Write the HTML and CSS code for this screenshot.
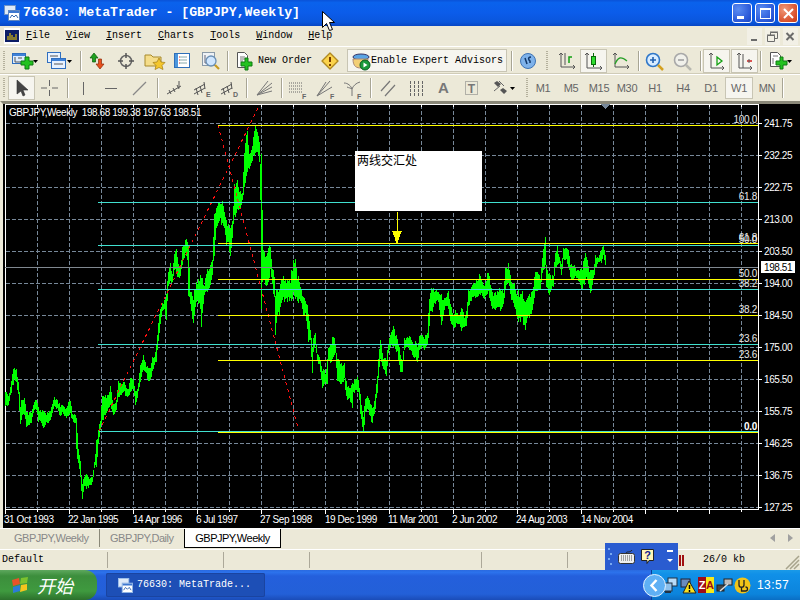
FILE: index.html
```html
<!DOCTYPE html>
<html lang="en">
<head>
<meta charset="utf-8">
<title>76630: MetaTrader - [GBPJPY,Weekly]</title>
<link rel="stylesheet" href="styles.css">
</head>
<body>
<div class="screen">
  <header class="titlebar">
    <svg class="appicon" width="16" height="16" viewBox="0 0 16 16"><rect x="0.5" y="0.5" width="11" height="9" fill="#dfeaf8" stroke="#6f93c8"/><rect x="4.5" y="5.5" width="11" height="10" fill="#fff" stroke="#5f86c0"/><rect x="5" y="6" width="10" height="2" fill="#3f78d0"/><path d="M6 13l2-3 2 2 2-2 2 3" fill="none" stroke="#3a6ab0"/></svg>
    <span class="apptitle">76630: MetaTrader - [GBPJPY,Weekly]</span>
    <div class="capbtns">
      <span class="capbtn"><svg width="19" height="19" viewBox="0 0 19 19"><rect x="4" y="12" width="7" height="3" fill="#fff"/></svg></span>
      <span class="capbtn"><svg width="19" height="19" viewBox="0 0 19 19"><rect x="4.5" y="4.5" width="10" height="10" fill="none" stroke="#fff"/><rect x="4" y="4" width="11" height="2" fill="#fff"/></svg></span>
      <span class="capbtn capclose"><svg width="19" height="19" viewBox="0 0 19 19"><path d="M5 5l9 9M14 5l-9 9" stroke="#fff" stroke-width="2"/></svg></span>
    </div>
  </header>

  <nav class="menubar">
    <svg class="docicon" width="16" height="16" viewBox="0 0 16 16"><rect width="16" height="16" fill="#fff"/><rect x="1" y="2" width="14" height="12" fill="#0c1d66"/><path d="M4 12V8M6 12V5M8 12V7M10 12V9M12 12V6" stroke="#ffd800"/></svg>
    <span class="menu m1"><u>F</u>ile</span>
    <span class="menu m2"><u>V</u>iew</span>
    <span class="menu m3"><u>I</u>nsert</span>
    <span class="menu m4"><u>C</u>harts</span>
    <span class="menu m5"><u>T</u>ools</span>
    <span class="menu m6"><u>W</u>indow</span>
    <span class="menu m7"><u>H</u>elp</span>
    <div class="docbtns">
      <span class="docbtn"><svg width="15" height="17" viewBox="0 0 15 17"><rect x="4" y="11" width="6" height="2" fill="#6b6b6b"/></svg></span>
      <span class="docbtn"><svg width="15" height="17" viewBox="0 0 15 17"><path d="M2.5 7.5h7v6h-7zM5.5 7V4.500h7v6H10" fill="none" stroke="#6b6b6b"/><path d="M2 7h8M5 4h8" stroke="#6b6b6b"/></svg></span>
      <span class="docbtn"><svg width="15" height="17" viewBox="0 0 15 17"><path d="M3.500 5l7 7M10.500 5l-7 7" stroke="#6b6b6b" stroke-width="2"/></svg></span>
    </div>
  </nav>

  <div class="toolbar tb1">
    <span class="grip"></span>
    <svg class="btn" width="36" height="24" viewBox="0 0 36 24"><rect x="4.500" y="4.500" width="13" height="10" fill="#dcecff" stroke="#2f6fc0"/><rect x="5" y="5" width="12" height="2" fill="#3f82d8"/><path d="M7 8v5h8M10 9h4" stroke="#555" fill="none"/><path d="M14 10h4V6h4v4h4v4h-4v4h-4v-4h-4z" transform="translate(-1 2)" fill="#23c21f" stroke="#0f7a12"/><path d="M25 11h5l-2.500 3z" fill="#000"/></svg>
    <svg class="btn" width="32" height="24" viewBox="0 0 32 24"><rect x="3.500" y="3.500" width="13" height="10" fill="#e8f2ff" stroke="#2f6fc0"/><rect x="7.500" y="9.500" width="14" height="10" fill="#e8f2ff" stroke="#2f6fc0"/><rect x="8" y="10" width="13" height="2" fill="#3f82d8"/><path d="M10 15h9M6 7h8" stroke="#555"/><path d="M23 11h5l-2.500 3z" fill="#000"/></svg>
    <span class="sep"></span>
    <svg class="btn" width="28" height="24" viewBox="0 0 28 24"><path d="M10 4l-4 5h2.500v4h3V9H14z" fill="#20a020" stroke="#0a5a0a" stroke-width=".7"/><path d="M16 20l4-5h-2.500v-5h-3v5H12z" fill="#e8501c" stroke="#8a2a0a" stroke-width=".7"/></svg>
    <svg class="btn" width="28" height="24" viewBox="0 0 28 24"><circle cx="14" cy="12" r="5.500" fill="none" stroke="#666" stroke-width="1.500"/><path d="M14 4v5M14 15v5M6 12h5M17 12h5" stroke="#555" stroke-width="1.500"/></svg>
    <svg class="btn" width="28" height="24" viewBox="0 0 28 24"><path d="M5 6h6l2 2h8v9H5z" fill="#f5dd8a" stroke="#a88a2c"/><path d="M19 9l2 4 4 .5-3 3 1 4-4-2-4 2 1-4-3-3 4-.5z" fill="#f4c62c" stroke="#a07a10" stroke-width=".7"/></svg>
    <svg class="btn" width="28" height="24" viewBox="0 0 28 24"><rect x="6.500" y="4.500" width="15" height="14" fill="#fff" stroke="#2e6fb8"/><rect x="7" y="5" width="3" height="13" fill="#4c96dd"/><path d="M12 8h7M12 11h7M12 14h7" stroke="#8aa" /><path d="M11 8h1M11 11h1M11 14h1" stroke="#d03030"/></svg>
    <svg class="btn" width="28" height="24" viewBox="0 0 28 24"><rect x="6.500" y="3.500" width="12" height="13" fill="#eef2f6" stroke="#8a9aa8"/><path d="M9 6v8h7" stroke="#667" fill="none"/><circle cx="15" cy="12" r="5" fill="#cfe6ff" stroke="#6a8fb4" stroke-width="1.300"/><path d="M19 16l4 4" stroke="#c89a20" stroke-width="2.200"/></svg>
    <span class="sep sep6"></span>
    <div class="orderbtn">
      <svg width="24" height="24" viewBox="0 0 24 24"><path d="M7.500 3.500h7l3 3v12h-10z" fill="#fff" stroke="#555"/><path d="M10 8h5M10 10h5M10 12h3" stroke="#777"/><path d="M13 12h4V8h3v4h4v4h-4v4h-3v-4h-4z" transform="translate(-2 1)" fill="#23c21f" stroke="#0f7a12"/></svg>
      <span class="monotxt">New Order</span>
    </div>
    <svg class="btn" width="28" height="24" viewBox="0 0 28 24"><path d="M14 4l8 8-8 8-8-8z" fill="#fbd34c" stroke="#b08a20" stroke-linejoin="round" stroke-width="1.400"/><path d="M14 8v5M14 15v2" stroke="#7a3c00" stroke-width="2"/></svg>
    <div class="eabtn">
      <svg width="20" height="20" viewBox="0 0 20 20"><ellipse cx="10" cy="6" rx="8" ry="3" fill="#5aa4e4" stroke="#336"/><path d="M2 8c0 8 4 9 8 9 3 0 6-2 7-9z" fill="#f3cf76" stroke="#a87"/><circle cx="14" cy="14" r="5" fill="#1a9a3a" stroke="#0a5a20"/><path d="M12.500 11.500l4 2.500-4 2.500z" fill="#fff"/></svg>
      <span class="monotxt">Enable Expert Advisors</span>
    </div>
    <span class="sep"></span>
    <svg class="btn" width="26" height="24" viewBox="0 0 26 24"><circle cx="13" cy="12" r="7.500" fill="#7eb2ea" stroke="#3e73b4"/><path d="M10 9l2 6M16 8c-2 0-3 1-2 3l1 1v2" fill="none" stroke="#12386a" stroke-width="1.500"/></svg>
    <span class="grip grip12"></span>
    <svg class="btn" width="27" height="24" viewBox="0 0 27 24"><path d="M8 4v14h14M6 6l2-2 2 2M20 16l2 2-2 2M12 16V4" fill="none" stroke="#555"/><path d="M16 14v-6h3" fill="none" stroke="#12a012" stroke-width="1.500"/></svg>
    <svg class="btn on" width="27" height="24" viewBox="0 0 27 24"><path d="M7 4v15h15M5 6l2-2 2 2M20 17l2 2-2 2" fill="none" stroke="#555"/><rect x="11.500" y="7.500" width="4" height="8" fill="#2fdc2f" stroke="#0a6a0a"/><path d="M13.500 4v3M13.500 15v3" stroke="#0a6a0a"/></svg>
    <svg class="btn" width="28" height="24" viewBox="0 0 28 24"><path d="M8 4v14h14M6 6l2-2 2 2M20 16l2 2-2 2" fill="none" stroke="#555"/><path d="M8 15c3-7 6-8 12-3" fill="none" stroke="#2aa02a" stroke-width="1.300"/></svg>
    <span class="sep sep6"></span>
    <svg class="btn" width="28" height="24" viewBox="0 0 28 24"><circle cx="12" cy="11" r="6.500" fill="#d8ecff" stroke="#2f77c8" stroke-width="1.600"/><path d="M9 11h6M12 8v6" stroke="#2060b0" stroke-width="1.600"/><path d="M17 16l5 5" stroke="#d4a020" stroke-width="2.500"/></svg>
    <svg class="btn" width="28" height="24" viewBox="0 0 28 24"><circle cx="12" cy="11" r="6.500" fill="#f0f0ea" stroke="#a8a8a8" stroke-width="1.600"/><path d="M9 11h6" stroke="#a0a0a0" stroke-width="1.600"/><path d="M17 16l5 5" stroke="#b8b8b0" stroke-width="2.500"/></svg>
    <span class="sep sep6"></span>
    <svg class="btn on" width="27" height="24" viewBox="0 0 27 24"><path d="M8 4v15h13M6 6l2-2 2 2M19 17l2 2-2 2" fill="none" stroke="#555"/><path d="M14 8l5 4-5 4z" fill="none" stroke="#12a012" stroke-width="1.300"/></svg>
    <svg class="btn on gapl" width="27" height="24" viewBox="0 0 27 24"><path d="M8 4v15h13M6 6l2-2 2 2M19 17l2 2-2 2M12 5v14" fill="none" stroke="#555"/><path d="M16 12h5" stroke="#d02020" stroke-width="1.500"/><path d="M18 10v4" stroke="#555"/></svg>
    <span class="sep sep6"></span>
    <svg class="btn" width="36" height="24" viewBox="0 0 36 24"><path d="M7.500 3.500h7l3 3v11h-10z" fill="#fff" stroke="#555"/><path d="M10 7h5M10 9v6" stroke="#777"/><path d="M13 12h4V8h3v4h4v4h-4v4h-3v-4h-4z" fill="#23c21f" stroke="#0f7a12"/><path d="M24 11h5l-2.500 3z" fill="#000"/></svg>
  </div>

  <div class="toolbar tb2">
    <span class="grip"></span>
    <svg class="btn on" width="27" height="24" viewBox="0 0 27 24"><path d="M9 4v14l4-3 2 5 2-1-2-5h5z" fill="#444" stroke="#333" stroke-width=".6"/></svg>
    <svg class="btn" width="29" height="24" viewBox="0 0 29 24"><path d="M14.500 4v6M14.500 14v6M6 12h6M17 12h6" stroke="#666"/></svg>
    <span class="sep sep6"></span>
    <svg class="btn" width="26" height="24" viewBox="0 0 26 24"><path d="M13.500 6v13" stroke="#666"/></svg>
    <svg class="btn" width="30" height="24" viewBox="0 0 30 24"><path d="M9 12.500h12" stroke="#666"/></svg>
    <svg class="btn" width="28" height="24" viewBox="0 0 28 24"><path d="M7 19L20 6" stroke="#888" stroke-width="1.200"/></svg>
    <span class="sep sep6"></span>
    <svg class="btn" width="28" height="24" viewBox="0 0 28 24"><path d="M7 18l14-8M9 14l2 4M13 12l2 4M17 9l2 4M19 5v7" stroke="#555" fill="none"/></svg>
    <svg class="btn" width="27" height="24" viewBox="0 0 27 24"><path d="M6 18l11-6M6 14l11-6M8 12l2 7M12 10l2 7M16 6l1 7" stroke="#555" fill="none"/><text class="tinyletter" x="18" y="21">E</text></svg>
    <svg class="btn" width="28" height="24" viewBox="0 0 28 24"><path d="M6 18l11-6M6 14l11-6M8 12l2 7M12 10l2 7M16 6l1 7" stroke="#555" fill="none"/><text class="tinyletter" x="18" y="21">D</text></svg>
    <span class="sep sep6"></span>
    <svg class="btn" width="30" height="24" viewBox="0 0 30 24"><path d="M8 19L23 7M8 19L23 11M8 19L23 15M8 19L19 5" stroke="#777" fill="none"/></svg>
    <span class="sep sep4"></span>
    <svg class="btn" width="29" height="24" viewBox="0 0 29 24"><path d="M6 7h14M6 10h14M6 13h14M6 16h14" stroke="#666" stroke-dasharray="1 1" fill="none"/><text class="tinyletter" x="19" y="23">F</text></svg>
    <svg class="btn" width="27" height="24" viewBox="0 0 27 24"><path d="M5 20L18 5M5 20L20 11M5 20L14 6" stroke="#777" fill="none"/><text class="tinyletter" x="18" y="23">F</text></svg>
    <svg class="btn" width="28" height="24" viewBox="0 0 28 24"><path d="M5 7c4 0 7 3 8 6 1-3 4-6 8-7M13 13v7M8 11c2 1 4 1 5 2" stroke="#777" fill="none"/><text class="tinyletter" x="18" y="23">F</text></svg>
    <span class="sep sep6"></span>
    <svg class="btn" width="29" height="24" viewBox="0 0 29 24"><path d="M8 15L17 5M12 20L22 9" stroke="#777" stroke-width="1.200"/></svg>
    <svg class="btn" width="28" height="24" viewBox="0 0 28 24"><path d="M8.500 5v15M12.500 5v15M16.500 5v15M20.500 5v15" stroke="#666" stroke-dasharray="3 1"/></svg>
    <span class="btn letter">A</span>
    <svg class="btn" width="29" height="24" viewBox="0 0 29 24"><rect x="8.500" y="5.500" width="12" height="13" fill="none" stroke="#777" stroke-dasharray="1 1"/><text class="boxletter" x="14.500" y="17">T</text></svg>
    <svg class="btn" width="36" height="24" viewBox="0 0 36 24"><path d="M8 7l4 4 3-3-4-3zM14 14l4 4 3-3-4-3z" fill="#555"/><path d="M13 5l5 5M8 15l6-5" stroke="#666"/><path d="M24 11h5l-2.500 3z" fill="#000"/></svg>
    <span class="grip grip7"></span>
    <span class="tf">M1</span>
    <span class="tf">M5</span>
    <span class="tf">M15</span>
    <span class="tf">M30</span>
    <span class="tf">H1</span>
    <span class="tf">H4</span>
    <span class="tf">D1</span>
    <span class="tf tfon">W1</span>
    <span class="tf">MN</span>
    <span class="sep sep2"></span>
  </div>

  <main class="chart">
    <svg id="plot" width="797" height="424" viewBox="3 104 797 424">
      <g id="grid" class="grid"></g>
      <rect class="frame" x="5.500" y="104.500" width="752.500" height="404.500"/>
      <g id="axisticks" class="ticks"></g>
      <path class="marker" d="M601 104h9l-4.500 5z"/>
      <path id="series" class="series"/>
      <g class="dots">
        <path d="M218 125L298 428"/>
        <path d="M99 431L260 104"/>
      </g>
      <g class="cyan">
        <path d="M98 202.500H758M98 245.500H758M98 289.500H758M98 344.500H758M99 431.500H758"/>
      </g>
      <path class="grayline" d="M5 267.500H758"/>
      <g class="yellow">
        <path d="M218 125.500H758M218 243.500H758M218 279.500H758M218 315.500H758M218 360.500H758M218 432.500H758"/>
      </g>
      <text class="lbl" x="9" y="116" xml:space="preserve">GBPJPY,Weekly  198.68 199.38 197.63 198.51</text>
      <g class="fibo">
        <text x="757" y="123">100.0</text>
        <text x="757" y="200">61.8</text>
        <text x="757" y="241">61.8</text>
        <text x="757" y="243">50.0</text>
        <text x="757" y="277">50.0</text>
        <text x="757" y="287">38.2</text>
        <text x="757" y="313">38.2</text>
        <text x="757" y="342">23.6</text>
        <text x="757" y="358">23.6</text>
        <text class="bold" x="757" y="430">0.0</text>
      </g>
      <g class="prices">
        <text x="764" y="127">241.75</text>
        <text x="764" y="159">232.25</text>
        <text x="764" y="191">222.75</text>
        <text x="764" y="223">213.00</text>
        <text x="764" y="255">203.50</text>
        <text x="764" y="287">194.00</text>
        <text x="764" y="319">184.50</text>
        <text x="764" y="351">175.00</text>
        <text x="764" y="383">165.50</text>
        <text x="764" y="415">155.75</text>
        <text x="764" y="447">146.25</text>
        <text x="764" y="479">136.75</text>
        <text x="764" y="511">127.25</text>
      </g>
      <rect class="pricebox" x="761" y="261" width="34" height="12"/>
      <text class="pricecur" x="764" y="271">198.51</text>
      <g class="times">
        <text x="4" y="523">31 Oct 1993</text>
        <text x="68" y="523">22 Jan 1995</text>
        <text x="133" y="523">14 Apr 1996</text>
        <text x="196" y="523">6 Jul 1997</text>
        <text x="260" y="523">27 Sep 1998</text>
        <text x="325" y="523">19 Dec 1999</text>
        <text x="388" y="523">11 Mar 2001</text>
        <text x="452" y="523">2 Jun 2002</text>
        <text x="516" y="523">24 Aug 2003</text>
        <text x="581" y="523">14 Nov 2004</text>
      </g>
      <rect class="notebox" x="355" y="151" width="127" height="60"/>
      <text class="notetext" x="357" y="165">两线交汇处</text>
      <path class="arrowline" d="M397.500 212V232"/>
      <path class="arrowhead" d="M392 231h10l-3 7-1 5h-2l-1-5z"/>
    </svg>
  </main>

  <div class="tabs">
    <span class="tab t1">GBPJPY,Weekly</span>
    <span class="tab t2">GBPJPY,Daily</span>
    <span class="tab active">GBPJPY,Weekly</span>
    <div class="tabarrows">
      <svg width="6" height="8" viewBox="0 0 6 8"><path d="M5 0v8L0 4z" fill="#a0a0a0"/></svg>
      <svg width="6" height="8" viewBox="0 0 6 8"><path d="M1 0v8l5-4z" fill="#a0a0a0"/></svg>
    </div>
  </div>

  <footer class="status">
    <span class="cell c1">Default</span>
    <span class="cell c2"></span>
    <span class="cell c3"></span>
    <span class="cell c4"></span>
    <span class="cell c5"></span>
    <span class="cell c6"><svg class="netbars" width="6" height="11" viewBox="0 0 6 11"><path d="M1 0v11M4 0v11" stroke="#a01010" stroke-width="2"/></svg></span>
    <span class="cell c7">26/0 kb</span>
    <svg class="sizer" width="16" height="16" viewBox="0 0 16 16"><path d="M15 2L2 15M15 6L6 15M15 10L10 15" stroke="#a8a48c" stroke-width="1.500"/></svg>
  </footer>

  <div class="langbar">
    <svg class="gripdots" width="6" height="22" viewBox="0 0 6 22"><path d="M1 2h2v2H1zM3 7h2v2H3zM1 12h2v2H1zM3 17h2v2H3z" fill="#78a8f0"/></svg>
    <svg class="lbkeys" width="17" height="14" viewBox="0 0 17 14"><rect x=".5" y="3.500" width="16" height="10" rx="2" fill="#eee" stroke="#333"/><path d="M3 6h11M3 8h11M3 10h11" stroke="#555" stroke-dasharray="1 1"/><path d="M8 3C9 1 12 3 14 0" fill="none" stroke="#222"/></svg>
    <svg class="lbhelp" width="14" height="16" viewBox="0 0 14 16"><path d="M.5.500h12v11H8l-2 3v-3H.5z" fill="#fff6b8" stroke="#222"/><text class="qmark" x="6.500" y="10">?</text></svg>
    <svg class="lbctl" width="6" height="15" viewBox="0 0 6 15"><path d="M0 1h6v2H0z" fill="#fff"/><path d="M0 10h6l-3 3z" fill="#fff"/></svg>
  </div>

  <div class="taskbar">
    <div class="start">
      <svg width="20" height="20" viewBox="0 0 20 20"><path d="M2 5l7-2 1 6-7 2z" fill="#e8532a"/><path d="M11 3l7-1-1 6-7 1z" fill="#7cc22e"/><path d="M3 12l7-2 0 6-7 2z" fill="#2c7cd8"/><path d="M11 10l6-1 0 6-7 2z" fill="#f6c51e"/></svg>
      <span class="starttext">开始</span>
    </div>
    <div class="taskbtn">
      <svg width="15" height="15" viewBox="0 0 16 16"><rect x="0.500" y="0.500" width="11" height="9" fill="#dfeaf8" stroke="#9fc0ea"/><rect x="4.500" y="5.500" width="11" height="10" fill="#fff" stroke="#8fb4e4"/><rect x="5" y="6" width="10" height="2" fill="#3f78d0"/><path d="M6 13l2-3 2 2 2-2 2 3" fill="none" stroke="#3a6ab0"/></svg>
      <span class="tasktext">76630: MetaTrade...</span>
    </div>
    <div class="tray">
      <svg class="trayback" width="23" height="23" viewBox="0 0 23 23"><circle cx="11.500" cy="11.500" r="11" fill="#5fb0f4" stroke="#e4f2ff"/><path d="M13.500 6l-5 5.500 5 5.500" fill="none" stroke="#fff" stroke-width="2.500"/></svg>
      <svg class="ti1" width="16" height="17" viewBox="0 0 16 17"><rect x="6" y="1" width="9" height="8" fill="#b8dcf8" stroke="#234"/><rect x="1" y="6" width="9" height="8" fill="#8cc0ec" stroke="#234"/><path d="M3 15h6" stroke="#234" stroke-width="2"/></svg>
      <svg class="ti2" width="17" height="17" viewBox="0 0 17 17"><rect x="1" y="2" width="9" height="8" fill="#6a8cc0" stroke="#223"/><path d="M9 4l7 12H3z" fill="#f8e020" stroke="#222"/><path d="M9.500 8v4M9.500 13v2" stroke="#000" stroke-width="1.500"/></svg>
      <span class="za"><b class="zaz">Z</b><b class="zaa">A</b></span>
      <svg class="ti4" width="17" height="17" viewBox="0 0 17 17"><rect x="1" y="8" width="7" height="6" fill="#444" stroke="#222"/><rect x="8" y="2" width="8" height="6" fill="#bbb" stroke="#222"/><path d="M4 14l8-7" stroke="#ddd" stroke-width="1.500"/></svg>
      <svg class="ti5" width="17" height="17" viewBox="0 0 17 17"><circle cx="8.500" cy="8.500" r="8" fill="#f2c418"/><path d="M5 3v5c0 3 5 3 5 0V3M7.500 11v3h4a2 2 0 0 0 0-4" fill="none" stroke="#222" stroke-width="1.300"/></svg>
      <span class="clock">13:57</span>
    </div>
  </div>

  <svg class="cursor" width="13" height="21" viewBox="0 0 13 21"><path d="M.5.500v16l4-4 3 7 3-1-3-7h5z" fill="#fff" stroke="#000"/></svg>
</div>
<script src="chart.js"></script>
</body>
</html>
```
FILE: styles.css
```css
* { box-sizing: border-box; }
html, body { margin: 0; padding: 0; }
body { width: 800px; height: 600px; overflow: hidden; background: #ece9d8; font-family: "Liberation Sans", Arial, sans-serif; }
.screen { position: relative; width: 800px; height: 600px; display: flex; flex-direction: column; overflow: hidden; }

.titlebar { height: 26px; flex: none; display: flex; align-items: center; padding: 0 2px 1px 4px; background: linear-gradient(#0a52d8 0, #0a62ec 10%, #0b5cea 50%, #0a56dc 85%, #0846c4 100%); }
.appicon { flex: none; }
.apptitle { margin-left: 3px; color: #fff; font: bold 13.2px/1 "Liberation Mono", monospace; white-space: pre; }
.capbtns { margin-left: auto; display: flex; gap: 3px; }
.capbtn { width: 20px; height: 20px; border: 1px solid #fff; border-radius: 3px; background: radial-gradient(circle at 30% 30%, #5a8cf2, #2a58d8 70%, #1c48c0); display: block; }
.capbtn svg { display: block; }
.capclose { background: radial-gradient(circle at 30% 30%, #f09878, #d8502c 70%, #c03a18); }

.menubar { height: 20px; flex: none; position: relative; display: flex; align-items: center; background: #ece9d8; padding-left: 4px; font: 10px/1 "Liberation Mono", monospace; color: #000; }
.docicon { flex: none; }
.menu { white-space: pre; font-size: 10px; }
.menu u { text-decoration: underline; }
.m1 { margin-left: 6px; }
.m2 { margin-left: 16px; }
.m3 { margin-left: 16px; }
.m4 { margin-left: 16px; }
.m5 { margin-left: 16px; }
.m6 { margin-left: 16px; }
.m7 { margin-left: 16px; }
.docbtns { margin-left: auto; display: flex; gap: 3px; padding-right: 2px; }
.docbtn { width: 15px; height: 17px; display: block; background: #f2f0e6; }
.docbtn svg { display: block; }

.toolbar { flex: none; display: flex; align-items: center; background: #ece9d8; border-top: 1px solid #fff; overflow: hidden; }
.tb1 { height: 28px; box-shadow: inset 0 -1px 0 #d0ccb8; }
.tb2 { height: 27px; }
.btn { flex: none; display: block; }
.btn.on { background: #f6f5ef; outline: 1px solid #c8c5b4; outline-offset: -1px; }
.gapl { margin-left: 1px; margin-right: -1px; }
.grip { flex: none; width: 8px; height: 20px; position: relative; }
.grip::before { content: ""; position: absolute; left: 3px; top: 0; width: 2px; height: 20px; background: repeating-linear-gradient(#b4b09c 0 1px, transparent 1px 2px); }
.grip12 { width: 12px; }
.grip12::before { left: 5px; }
.grip7 { width: 7px; }
.grip7::before { left: 4px; }
.sep { flex: none; width: 8px; height: 20px; position: relative; }
.sep::before { content: ""; position: absolute; left: 50%; top: 0; width: 1px; height: 100%; background: #a8a594; box-shadow: 1px 0 0 #fff; }
.sep6 { width: 6px; }
.sep4 { width: 4px; }
.sep2 { width: 2px; }
.monotxt { font: 10px/1 "Liberation Mono", monospace; color: #000; white-space: pre; }
.orderbtn { flex: none; width: 86px; height: 24px; display: flex; align-items: center; gap: 4px; }
.eabtn { flex: none; width: 160px; height: 23px; margin-left: 3px; display: flex; align-items: center; padding-left: 3px; background: #f6f5ef; border: 1px solid #c8c5b4; }
.letter { width: 27px; text-align: center; font: bold 15px/24px "Liberation Sans", sans-serif; color: #777; }
.tf { flex: none; width: 28px; height: 22px; display: flex; align-items: center; justify-content: center; font: 11px/1 "Liberation Sans", sans-serif; letter-spacing: -.3px; color: #666; }
.tfon { background: #f6f5ef; outline: 1px solid #c8c5b4; outline-offset: -1px; }
.tinyletter { font: bold 7px "Liberation Sans", sans-serif; fill: #666; }
.boxletter { font: bold 12px "Liberation Sans", sans-serif; fill: #777; text-anchor: middle; }

.chart { flex: none; height: 427px; background: #000; border-top: 3px solid #8a8878; border-left: 3px solid #ece9d8; display: block; }
#plot { display: block; shape-rendering: crispEdges; font: 10px "Liberation Sans", sans-serif; }
.grid { stroke: #778899; stroke-width: 1; stroke-dasharray: 4 2; fill: none; }
.frame { fill: none; stroke: #fff; stroke-width: 1; }
.ticks { stroke: #fff; fill: none; }
.marker { fill: #778899; }
.series { stroke: #00ff00; stroke-width: 1; fill: none; }
.dots { stroke: #ff1010; stroke-width: 1; stroke-dasharray: 3 4; fill: none; }
.cyan { stroke: #40e0d0; fill: none; }
.grayline { stroke: #808890; fill: none; }
.yellow { stroke: #ffff00; fill: none; }
.lbl { fill: #fff; font-size: 10px; letter-spacing: -.42px; }
.fibo text { fill: #e8e8e8; text-anchor: end; font-size: 10px; letter-spacing: -.3px; }
.fibo .bold { font-weight: bold; fill: #fff; }
.prices text { fill: #fff; font-size: 10px; letter-spacing: -.4px; }
.pricebox { fill: #fff; }
.pricecur { fill: #000; font-size: 10px; letter-spacing: -.4px; }
.times text { fill: #fff; font-size: 10px; letter-spacing: -.45px; }
.notebox { fill: #fff; }
.notetext { fill: #000; font: 12px "Noto Sans CJK SC", sans-serif; }
.arrowline { stroke: #ffff00; fill: none; }
.arrowhead { fill: #ffff00; }

.tabs { flex: none; height: 21px; display: flex; align-items: flex-start; background: #ece9d8; border-top: 1px solid #fff; font: 11px/18px "Liberation Sans", sans-serif; letter-spacing: -.5px; color: #888; position: relative; }
.tab { display: block; height: 18px; white-space: nowrap; }
.t1 { margin-left: 14px; width: 86px; border-right: 1px solid #8a8878; }
.t2 { margin-left: 10px; width: 74px; }
.active { width: 97px; background: #fff; color: #000; border: 1px solid #000; border-top: 0; height: 19px; text-align: center; }
.tabarrows { margin-left: auto; display: flex; gap: 11px; padding: 5px 7px 0 0; }
.tabarrows svg { display: block; }

.status { flex: none; height: 21px; display: flex; align-items: center; background: #ece9d8; border-top: 1px solid #fff; font: 10px/1 "Liberation Mono", monospace; color: #000; position: relative; }
.cell { height: 16px; display: flex; align-items: center; border-right: 1px solid #aca899; flex: none; }
.c1 { width: 108px; padding-left: 2px; }
.c2 { width: 116px; }
.c3 { width: 86px; }
.c4 { width: 172px; }
.c5 { width: 86px; }
.c6 { width: 135px; border-right: 0; padding-left: 111px; }
.c7 { width: 60px; border-right: 0; }
.netbars { display: block; }
.sizer { position: absolute; right: 0; bottom: 0; }

.langbar { position: absolute; left: 605px; top: 543px; width: 73px; height: 27px; background: #2a5cd0; display: flex; align-items: center; padding-left: 2px; }
.lbkeys { margin-left: 5px; }
.lbhelp { margin-left: 6px; }
.qmark { font: bold 11px "Liberation Sans", sans-serif; fill: #10208c; text-anchor: middle; }
.lbctl { margin-left: 12px; }

.taskbar { flex: none; height: 30px; display: flex; align-items: stretch; background: linear-gradient(#2a6ae0 0, #2c72ec 8%, #245fdc 20%, #2360d8 80%, #1a4cb8 100%); }
.start { width: 97px; display: flex; align-items: center; padding-left: 10px; gap: 7px; border-radius: 0 12px 12px 0; background: linear-gradient(#5ea85e 0, #3c8e3c 20%, #3f9a3f 70%, #2c702c 100%); }
.starttext { font: italic 18px/1 "Noto Sans CJK SC", sans-serif; color: #fff; }
.taskbtn { margin: 3px 0 3px 9px; width: 159px; display: flex; align-items: center; gap: 4px; padding-left: 12px; background: #1d4fb6; border-radius: 2px; box-shadow: inset 0 0 0 1px #1a44a0; }
.tasktext { font: 10px/1 "Liberation Mono", monospace; color: #fff; white-space: pre; }
.tray { position: relative; margin-left: auto; width: 149px; display: flex; align-items: center; background: linear-gradient(#1a9ae8 0, #1090e8 15%, #0c84dc 80%, #0a6ec4 100%); border-left: 1px solid #0a3f96; }
.trayback { position: absolute; left: -9px; top: 4px; }
.ti1 { margin-left: 10px; }
.ti2 { margin-left: 2px; }
.ti4 { margin-left: 2px; }
.ti5 { margin-left: 1px; }
.za { display: flex; width: 16px; height: 16px; margin-left: 1px; font: bold 11px/16px "Liberation Sans", sans-serif; text-align: center; }
.zaz { width: 8px; background: #a00c18; color: #fff; }
.zaa { width: 8px; background: #f8e818; color: #a00c18; }
.clock { margin-left: 6px; font: 12px/1 "Liberation Sans", sans-serif; letter-spacing: .4px; color: #fff; }

.cursor { position: absolute; left: 322px; top: 11px; }
```
FILE: chart.js
```js
var bars = [
[5,390,407],[8,395,405],[10,387,397],[12,372,388],[14,365,382],[16,368,382],[18,382,397],[20,402,425],[22,398,415],[24,398,417],
[26,410,427],[28,412,427],[31,412,423],[33,403,413],[36,399,410],[38,407,422],[41,412,425],[43,408,432],[45,413,425],[48,412,423],
[51,407,418],[54,397,408],[57,400,410],[60,405,417],[62,405,413],[65,408,418],[68,402,417],[70,398,415],[72,413,420],[75,415,425],
[76,417,457],[78,447,463],[80,457,482],[81,475,492],[82,480,499],[84,477,488],[86,470,490],[88,477,488],[90,477,486],[92,477,483],
[94,460,470],[96,440,467],[98,430,447],[100,418,433],[102,393,425],[104,392,417],[106,395,413],[108,393,412],[110,382,407],[112,400,415],
[114,403,415],[116,400,410],[118,380,397],[120,383,398],[122,382,395],[124,382,393],[126,387,398],[128,388,397],[130,378,393],[133,378,390],
[135,390,408],[137,388,400],[140,365,383],[143,353,372],[146,365,375],[148,367,382],[150,368,380],[152,357,373],[154,355,367],[156,342,362],
[158,320,343],[160,308,325],[162,303,313],[164,300,310],[166,287,325],[168,270,287],[170,263,283],[172,273,282],[174,250,270],[176,248,275],
[178,263,280],[180,267,277],[182,247,267],[185,240,253],[187,237,260],[188,243,300],[190,290,307],[193,293,325],[196,280,305],[199,277,303],
[201,273,327],[204,283,297],[206,270,293],[208,268,290],[210,263,285],[212,260,277],[214,213,257],[216,207,233],[218,203,223],[220,200,223],
[222,197,227],[224,212,230],[226,220,247],[228,223,247],[230,227,263],[232,220,240],[234,183,217],[236,177,217],[238,183,210],[240,190,210],
[242,193,200],[243,170,197],[245,133,183],[247,128,173],[249,150,173],[251,150,163],[253,133,160],[255,123,157],[257,130,157],[259,138,163],
[260,163,208],[261,148,310],[263,247,280],[265,257,287],[267,245,287],[270,245,273],[272,267,287],[274,273,300],[275,287,340],[277,290,320],
[279,290,315],[282,273,302],[285,278,302],[288,278,302],[290,278,302],[293,255,300],[295,255,300],[297,273,305],[299,277,303],[301,290,303],
[303,295,317],[305,300,316],[308,308,343],[310,328,343],[312,343,375],[313,333,357],[315,333,345],[317,352,363],[319,355,365],[322,370,388],
[323,368,387],[325,372,382],[327,357,390],[328,345,362],[331,342,363],[333,330,362],[335,342,355],[337,358,382],[339,357,387],[342,365,383],
[344,360,382],[345,377,390],[347,383,403],[349,385,400],[352,383,408],[353,382,393],[356,377,393],[358,377,393],[360,393,415],[362,410,430],
[363,413,436],[365,397,415],[367,395,410],[369,400,415],[372,407,425],[373,407,417],[375,393,410],[377,373,393],[378,357,378],[380,337,365],
[383,357,370],[386,358,378],[388,342,355],[390,333,350],[393,325,347],[395,332,352],[397,337,353],[400,350,378],[402,360,373],[404,338,350],
[407,337,348],[410,333,352],[413,345,357],[415,337,358],[417,347,365],[419,333,350],[422,333,348],[424,338,350],[427,330,345],[428,310,340],
[430,288,317],[435,288,305],[438,290,302],[441,293,328],[445,298,308],[448,290,310],[451,307,328],[453,315,328],[455,310,327],[458,315,325],
[461,305,332],[464,316,330],[466,310,328],[468,290,308],[472,282,300],[477,280,297],[479,271,297],[482,280,297],[484,285,300],[488,268,297],
[492,292,313],[495,292,311],[500,287,311],[503,290,307],[505,268,290],[508,263,287],[511,277,300],[513,280,306],[517,290,323],[522,290,322],
[525,300,330],[528,295,320],[532,290,313],[535,268,293],[537,268,292],[540,277,290],[543,247,270],[545,235,270],[546,260,287],[548,270,297],
[551,277,290],[553,273,287],[555,250,270],[557,245,267],[559,257,263],[561,263,278],[563,247,262],[566,247,260],[568,247,267],[570,263,280],
[573,263,280],[575,267,277],[577,270,280],[579,270,283],[582,267,293],[585,250,282],[587,260,280],[590,270,297],[593,270,280],[595,255,270],
[598,257,263],[601,247,263],[603,244,257],[606,257,270]
];

var seed = 7;
function jitter(n) {
  seed = (seed * 1103515 + 12345) % 2147483648;
  return (seed >> 8) % n;
}

var d = "";
for (var i = 0; i < bars.length - 1; i++) {
  var a = bars[i], b = bars[i + 1];
  for (var x = a[0]; x < b[0]; x++) {
    var f = (x - a[0]) / (b[0] - a[0]);
    var hi = Math.round(a[1] + (b[1] - a[1]) * f);
    var lo = Math.round(a[2] + (b[2] - a[2]) * f);
    var trim = Math.floor((lo - hi) * 0.22) + 1;
    hi += jitter(trim);
    lo -= jitter(trim);
    d += "M" + x + ".5 " + hi + "V" + Math.max(lo, hi + 2);
  }
}
document.getElementById("series").setAttribute("d", d);

var g = "", k;
for (k = 0; k < 23; k++) g += "M" + (37 + 32 * k) + ".5 105V509";
for (k = 0; k < 13; k++) g += "M6 " + (123 + 32 * k) + ".5H758";
document.getElementById("grid").innerHTML = '<path d="' + g + '"/>';

var t = "";
for (k = 0; k < 24; k++) {
  var tx = 5 + 32 * k;
  t += "M" + tx + ".5 104V107M" + tx + ".5 509V" + (k % 2 ? 512 : 514);
}
for (k = 0; k < 13; k++) t += "M758 " + (123 + 32 * k) + ".5H762";
document.getElementById("axisticks").innerHTML = '<path d="' + t + '"/>';
```
